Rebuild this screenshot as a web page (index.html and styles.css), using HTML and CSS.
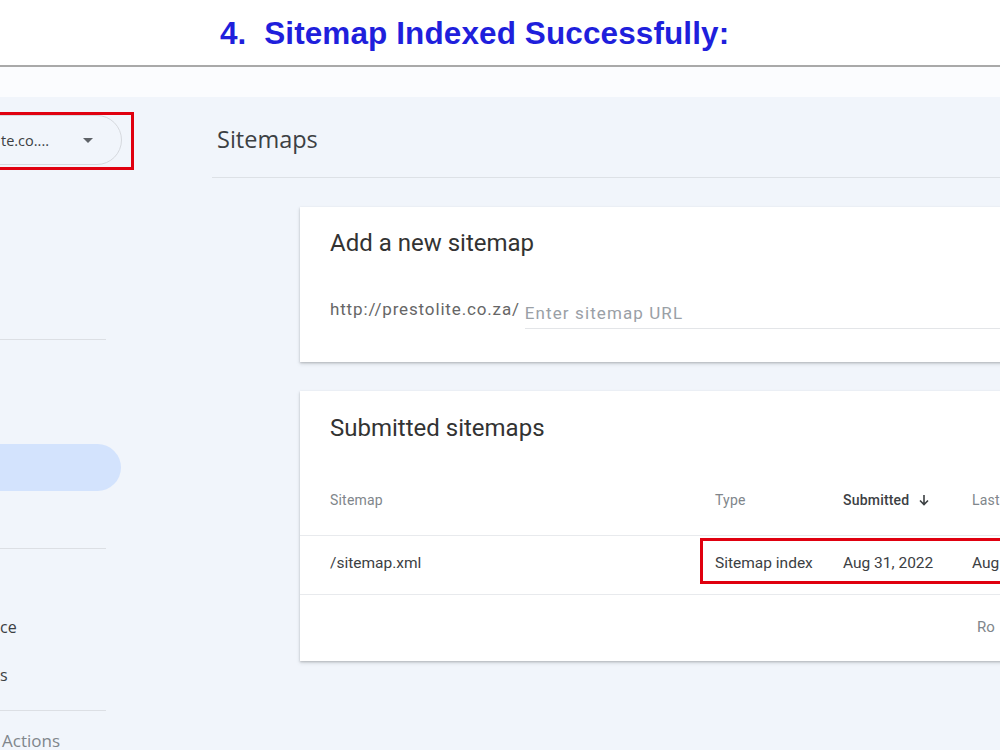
FILE: index.html
```html
<!DOCTYPE html>
<html>
<head>
<meta charset="utf-8">
<link rel="stylesheet" href="styles.css">
</head>
<body>
<header class="top">
  <h1 class="title">4.&nbsp; Sitemap Indexed Successfully:</h1>
</header>
<div class="spacer"></div>
<div class="app">
  <aside class="side">
    <div class="prop-wrap">
      <div class="prop">
        <span class="prop-text">te.co....</span>
        <svg class="caret" width="10" height="5" viewBox="0 0 10 5"><path d="M0 0h10L5 5z" fill="#5f6368"/></svg>
      </div>
      <div class="mark mark-prop"></div>
    </div>
    <div class="divider d1"></div>
    <div class="active"></div>
    <div class="divider d2"></div>
    <div class="nav nav1">ce</div>
    <div class="nav nav2">s</div>
    <div class="divider d3"></div>
    <div class="nav section">Actions</div>
  </aside>
  <main class="main">
    <div class="page-head"><h2>Sitemaps</h2></div>
    <section class="card add">
      <h3 class="card-title">Add a new sitemap</h3>
      <div class="url-row">
        <span class="prefix">http://prestolite.co.za/</span>
        <span class="url-input">Enter sitemap URL</span>
      </div>
    </section>
    <section class="card submitted">
      <h3 class="card-title">Submitted sitemaps</h3>
      <div class="table">
        <div class="row head">
          <span>Sitemap</span>
          <span>Type</span>
          <span class="sorted">Submitted
            <svg width="12" height="12" viewBox="0 0 12 12"><path d="M6 1v9M2 6.5l4 4 4-4" fill="none" stroke="#3c4043" stroke-width="1.6"/></svg>
          </span>
          <span>Last</span>
        </div>
        <div class="row body">
          <span>/sitemap.xml</span>
          <span>Sitemap index</span>
          <span>Aug 31, 2022</span>
          <span>Aug</span>
        </div>
        <div class="row foot">
          <span></span><span></span><span></span>
          <span>Ro</span>
        </div>
      </div>
      <div class="mark mark-row"></div>
    </section>
  </main>
</div>
</body>
</html>
```
FILE: styles.css
```css
html, body {
  margin: 0;
  padding: 0;
}
body {
  width: 1000px;
  height: 750px;
  overflow: hidden;
  background: #f1f5fb;
  font-family: Roboto, "Liberation Sans", sans-serif;
}
.top {
  height: 65px;
  background: #fff;
  border-bottom: 2px solid #a9a9a9;
  display: flex;
  align-items: center;
}
.title {
  margin: 2px 0 0 220px;
  font-family: "Liberation Sans Narrow", "Liberation Sans", Arial, sans-serif;
  font-weight: bold;
  font-size: 31.5px;
  color: #1f1fdc;
  white-space: nowrap;
  letter-spacing: 0.1px;
}
.spacer {
  height: 30px;
  background: #fbfcfe;
}
.app {
  display: flex;
}
.side {
  width: 212px;
  flex: none;
  display: flex;
  flex-direction: column;
}
.prop-wrap {
  position: relative;
  margin-top: 18px;
  margin-left: -200px;
  width: 322px;
}
.prop {
  height: 48px;
  border: 1px solid #d6d9de;
  border-radius: 25px;
  display: flex;
  align-items: center;
  padding: 0 28px 0 200px;
  font-family: "Open Sans", Roboto, sans-serif;
  font-size: 14.5px;
  color: #3c4043;
}
.prop-text {
  white-space: nowrap;
}
.caret {
  margin-left: auto;
}
.mark {
  position: absolute;
  border: 3px solid #e0000f;
  pointer-events: none;
}
.mark-prop {
  left: -10px;
  right: -12px;
  top: -3px;
  bottom: -5px;
}
.divider {
  width: 106px;
  height: 1px;
  background: #dcdfe4;
}
.d1 { margin-top: 174px; }
.active {
  margin-top: 104px;
  margin-left: -60px;
  width: 181px;
  height: 47px;
  background: #d3e3fd;
  border-radius: 0 24px 24px 0;
}
.d2 { margin-top: 57px; }
.nav {
  font-family: "Open Sans", Roboto, sans-serif;
  font-size: 16px;
  color: #3c4043;
  white-space: nowrap;
  height: 20px;
  line-height: 20px;
}
.nav1 {
  margin-top: 68px;
}
.nav2 {
  margin-top: 28px;
}
.d3 { margin-top: 25px; }
.section {
  margin-top: 20px;
  padding-left: 2px;
  font-size: 17px;
  color: #80868b;
}
.main {
  flex: 1;
  min-width: 0;
}
.page-head {
  height: 80px;
  border-bottom: 1px solid #dde1e6;
  display: flex;
  align-items: center;
  padding-left: 5px;
  margin-right: -100px;
}
.page-head h2 {
  margin: 3px 0 0;
  font-family: "Open Sans", Roboto, sans-serif;
  font-weight: 500;
  font-size: 23.5px;
  color: #3c4043;
}
.card {
  position: relative;
  margin-left: 88px;
  width: 820px;
  background: #fff;
  box-shadow: 0 1px 2px rgba(60,64,67,0.25), 0 2px 4px rgba(60,64,67,0.15);
}
.add {
  margin-top: 29px;
  height: 155px;
  padding: 0 0 0 30px;
  box-sizing: border-box;
}
.card-title {
  margin: 0;
  font-family: Roboto, sans-serif;
  font-weight: 400;
  font-size: 24px;
  color: #333;
  line-height: 28px;
}
.add .card-title {
  padding-top: 22px;
}
.url-row {
  margin-top: 37px;
  display: flex;
  align-items: flex-end;
}
.prefix {
  font-size: 17px;
  letter-spacing: 0.85px;
  color: #666;
  line-height: 22px;
  padding-bottom: 9px;
}
.url-input {
  margin-left: 5px;
  flex: 1;
  font-size: 17px;
  letter-spacing: 1.1px;
  color: #9aa0a6;
  line-height: 22px;
  padding-top: 8px;
  padding-bottom: 4px;
  border-bottom: 1px solid #e3e5e8;
}
.submitted {
  margin-top: 29px;
  height: 270px;
}
.submitted .card-title {
  padding: 23px 0 0 30px;
}
.table {
  margin-top: 23px;
}
.row {
  display: grid;
  grid-template-columns: 415px 128px 129px 1fr;
  align-items: center;
}
.row span {
  white-space: nowrap;
}
.row > span:first-child {
  padding-left: 30px;
}
.head {
  height: 70px;
  font-size: 14px;
  letter-spacing: 0.2px;
  color: #80868b;
  border-bottom: 1px solid #e8eaed;
}
.head .sorted {
  color: #3c4043;
  font-weight: 500;
  display: flex;
  align-items: center;
  gap: 9px;
}
.body {
  height: 58px;
  font-size: 15.5px;
  color: #3c4043;
  border-bottom: 1px solid #e8eaed;
}
.body span {
  margin-top: -5px;
}
.foot {
  height: 64px;
  font-size: 15px;
  color: #80868b;
}
.foot span:last-child {
  padding-left: 5px;
}
.mark-row {
  left: 400px;
  top: 147px;
  width: 500px;
  height: 40px;
}
```
